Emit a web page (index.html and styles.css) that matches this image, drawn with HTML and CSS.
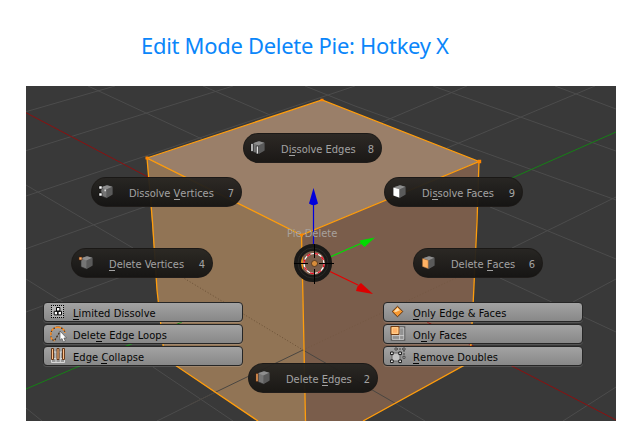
FILE: index.html
```html
<!DOCTYPE html>
<html lang="en">
<head>
<meta charset="utf-8">
<title>Edit Mode Delete Pie</title>
<link rel="stylesheet" href="styles.css">
</head>
<body>
<h1 class="title"><span>Edit Mode Delete Pie: Hotkey X</span></h1>
<main class="viewport">
  <svg class="scene" width="590" height="335" viewBox="26 86 590 335" fill="none">
    <path class="grid" d="M26 111.7L115 86M26 150.7L233 86M26 196L355 86M26 248.7L150 205M26 312L156 264M157 421L250 375M88 86L202 139M203 86L270 115M305 86L355 106L616 200M433 86L616 151M555 86L616 109M26 185L133 248M26 279L85 316M153 367L233 421M26 408L42 421M467 86L380 123M595 86L447 148M616 197L512 248M616 279L573 302M616 387L563 421M490 207L616 259M500 278L616 332M400 406L425 421"/>
    <path class="axis-x" d="M26 112.7L148 177M427 322L616 420"/>
    <path class="axis-y" d="M616 132L512 178M26 389L182 322"/>
    <path class="face-top" d="M147 158L322 100L479 161.5L301.5 235Z"/>
    <path class="face-left" d="M147 158L301.5 235L305.5 421H258L164.5 358L157 290Z"/>
    <path class="face-right" d="M479 161.5L301.5 235L305.5 421H363L470 362L473.3 300Z"/>
    <path class="floor" d="M190 404.5L303 350L400 406"/>
    <path class="hidden-edge" d="M182 277L303 350"/>
    <path class="hidden-edge faint" d="M303 350L473 270"/>
    <path class="axis-x" d="M427 322L471 345"/>
    <path class="axis-y" d="M120 349L182 322"/>
    <path class="edge" d="M147 158L322 100L479 161.5L301.5 235ZM147 158L152.5 222L157 290L164.5 358L258 421M479 161.5L477 222L473.3 300L470 362L363 421M301.5 235L303 300L305.5 421"/>
    <path class="vertex" d="M145.5 156.5h3v3h-3zM320.5 98.8h3v2.5h-3zM477.7 159.7h3.5v3.5h-3.5zM300 233.5h3v3h-3z"/>

    <path d="M313.5 204V246" stroke="#0000e0" stroke-width="1.2"/>
    <path d="M313.5 188L318 203.5Q313.5 207 309 203.5Z" fill="#0000dc"/>
    <path d="M330 257L362 243" stroke="#00e000" stroke-width="1.2"/>
    <path d="M375 237.5L364.5 247Q361 245 359.5 240.5Z" fill="#00dc00"/>
    <path d="M330 271.5L358 285" stroke="#e60000" stroke-width="1.2"/>
    <path d="M373 294L356 291Q357 285.5 361 283Z" fill="#dc0000"/>
    <text class="pie-title" x="287" y="237">Pie Delete</text>
    <circle cx="313" cy="263" r="15.6" stroke="#1a1917" stroke-width="7"/>
    <circle cx="313" cy="263" r="15" stroke="#2b2a27"/>
    <circle cx="314" cy="263.5" r="10" stroke="#fff" stroke-width="1.2"/>
    <circle cx="314" cy="263.5" r="10" stroke="#f00018" stroke-width="1.2" stroke-dasharray="3.93"/>
    <path d="M314.5 244V258M314.5 269V284M294 263.5H308M319 263.5H334" stroke="#000"/>
    <circle cx="314.5" cy="263.5" r="3" fill="#d88d3c" stroke="#3e2713" stroke-width=".7"/>
  </svg>

  <svg width="0" height="0" class="defs">
    <symbol id="cube" viewBox="0 0 16 16">
      <path d="M1 3.2L7 1.2L12.4 2.8V10.6L6.4 14L1 11.8Z" fill="#757575" stroke="#2c2c2c" stroke-width=".6"/>
      <path d="M1 3.2L7 1.2L12.4 2.8L6.4 5.4Z" fill="#8e8e8e"/>
      <path d="M6.4 5.4L12.4 2.8V10.6L6.4 14Z" fill="#5a5a5a"/>
    </symbol>
  </svg>

  <div class="pie n"><svg class="ico"><use href="#cube" width="16" height="16"/><path d="M-1 3.5h2v8h-2zM4.3 6h2v8h-2z" fill="#fff" stroke="#000" stroke-width=".6"/></svg><span class="label">D<u>i</u>ssolve Edges</span><b>8</b></div>
  <div class="pie nw"><svg class="ico"><use href="#cube" width="16" height="16"/><path d="M-1 2h3v3h-3zM-1 9h3v3h-3z" fill="#fff" stroke="#000" stroke-width=".5"/><path d="M4.4 5.4h1.6v1.8h-1.6z" fill="#ddd"/></svg><span class="label">Dissolve <u>V</u>ertices</span><b>7</b></div>
  <div class="pie ne"><svg class="ico"><use href="#cube" width="16" height="16"/><path d="M.4 3.4L6.2 5.3V13.6L.4 11.4Z" fill="#fff"/></svg><span class="label">Di<u>s</u>solve Faces</span><b>9</b></div>
  <div class="pie w"><svg class="ico"><use href="#cube" width="16" height="16"/><path d="M-1 2h3v3h-3z" fill="#ffac62" stroke="#4b230a" stroke-width=".6"/></svg><span class="label"><u>D</u>elete Vertices</span><b>4</b></div>
  <div class="pie e"><svg class="ico"><use href="#cube" width="16" height="16"/><path d="M.4 3.4L6.2 5.3V13.6L.4 11.4Z" fill="#ffb264" stroke="#8b4e1b" stroke-width=".4"/></svg><span class="label">Delete <u>F</u>aces</span><b>6</b></div>
  <div class="pie s"><svg class="ico"><use href="#cube" width="16" height="16"/><path d="M-1 3.5h2v8h-2z" fill="#ffac62" stroke="#4b230a" stroke-width=".6"/></svg><span class="label">Delete <u>E</u>dges</span><b>2</b></div>

  <div class="list left">
    <div class="item"><svg class="ico"><path d="M1.5 1.5h12v12h-12z" fill="#b4b4b4"/><path d="M1 1.5h13M1 13.5h13M1.5 1v13M13.5 1v13" fill="none" stroke="#000" stroke-dasharray="1"/><path d="M6.5 3.5h3.4v3.6h-3.4zM4.2 7.3h3.5v3.6h-3.5zM8 7.3h3.5v3.6h-3.5z" fill="#fff" stroke="#000"/></svg><span class="label"><u>L</u>imited Dissolve</span></div>
    <div class="item"><svg class="ico"><path d="M8 1.2C12 1.2 15 4 15 7M8 1.2C3.5 1.2 .8 4.5 .8 8.5C.8 12 2 14.3 4.5 14.7L10 5.5" fill="none" stroke="#3e260f" stroke-width="1.2" stroke-dasharray="2 1.3"/><path d="M8 1.2C12 1.2 15 4 15 7M8 1.2C3.5 1.2 .8 4.5 .8 8.5C.8 12 2 14.3 4.5 14.7" fill="none" stroke="#ff8d20" stroke-width="1.5" stroke-dasharray="3 1.6"/><path d="M10 5V14.2L12 12.5L13.5 16L15.3 15.2L13.9 12H16.5Z" fill="#fff" stroke="#444" stroke-width=".6"/></svg><span class="label">Dele<u>t</u>e Edge Loops</span></div>
    <div class="item"><svg class="ico"><path d="M1.5 4h13v10.5h-13zM1.5 10.5h13M6 4v10.5M10.3 4v10.5" fill="#999" stroke="#d8d8d8"/><path d="M1.5 .5h2v11h-2zM7 .5h2v11h-2zM12.5 .5h2v11h-2z" fill="#ffc08a" stroke="#582c0f" stroke-width=".9"/></svg><span class="label">Edge <u>C</u>ollapse</span></div>
  </div>
  <div class="list right">
    <div class="item"><svg class="ico"><path d="M7.5 2.3L12.8 7.5L7.5 12.8L2.2 7.5Z" fill="#f7982f" stroke="#5d320f"/><path d="M7.5 3.8L3.8 7.5L6 8L10 6.3Z" fill="#ffdca8"/></svg><span class="label"><u>O</u>nly Edge &amp; Faces</span></div>
    <div class="item"><svg class="ico"><path d="M1.5 1h13v13h-13z" fill="#929292" stroke="#585858" stroke-width="1.6"/><path d="M2.2 1.8h11.6v11.6h-11.6zM2 9.6h12M9.6 2v12" fill="none" stroke="#d0d0d0" stroke-width=".9"/><path d="M1 .5h8v8h-8z" fill="#ffb26a" stroke="#713b11"/><path d="M2.2 1.7h5.6v5.6h-5.6z" fill="none" stroke="#ffda9b" stroke-width=".8"/></svg><span class="label">O<u>n</u>ly Faces</span></div>
    <div class="item"><svg class="ico"><path d="M6 1h8v8" fill="none" stroke="#444" stroke-dasharray="2 1"/><path d="M5 0h2v2h-2zM13 0h2v2h-2zM13 8.3h2v2h-2z" fill="#ccc" stroke="#333" stroke-width=".8"/><path d="M2 5h8v8h-8z" fill="#c4c4c4" stroke="#666"/><path d="M.6 4h2.6v2.6h-2.6zM8.8 4h2.6v2.6h-2.6zM.6 12h2.6v2.6h-2.6zM8.8 12h2.6v2.6h-2.6z" fill="#fff" stroke="#000" stroke-width=".9"/></svg><span class="label"><u>R</u>emove Doubles</span></div>
  </div>
</main>
</body>
</html>
```
FILE: styles.css
```css
* { box-sizing: border-box; }
body {
  margin: 0;
  width: 639px;
  height: 421px;
  overflow: hidden;
  background: #fff;
  font-family: "DejaVu Sans Condensed", "DejaVu Sans", sans-serif;
  font-stretch: condensed;
  font-size: 11px;
}
.title {
  margin: 0;
  height: 86px;
  padding: 31px 0 0 141px;
  font: 400 22.5px/30px "Noto Sans", sans-serif;
  letter-spacing: -0.3px;
  color: #0a86fa;
  white-space: nowrap;
}
.title span {
  display: inline-block;
  transform: scaleX(.977);
  transform-origin: 0 50%;
}
.viewport {
  position: relative;
  width: 590px;
  height: 335px;
  margin-left: 26px;
  overflow: hidden;
  background: #393939;
}
.scene { display: block; }
.defs { position: absolute; }
.grid { stroke: #4c4c4c; }
.axis-x { stroke: #8c1010; }
.axis-y { stroke: #168016; }
.face-top { fill: #9a7f69; }
.face-left { fill: #917455; }
.face-right { fill: #7a5d4b; }
.edge { stroke: #ff9d0c; stroke-width: 1.3; }
.vertex { fill: #ff8500; }
.floor { stroke: #4a4641; }
.hidden-edge { stroke: #6b5136; stroke-dasharray: 1 2; }
.faint { opacity: .4; }
.pie-title { fill: #a8a29d; font-size: 11px; }

.pie {
  position: absolute;
  display: flex;
  align-items: center;
  height: 30px;
  padding: 0 7px 0 8px;
  border: 1px solid rgba(30, 27, 24, .75);
  border-radius: 15px;
  background: linear-gradient(rgba(39, 37, 34, .95), rgba(20, 19, 18, .95));
  color: #a3a3a3;
}
.pie b { margin-left: auto; padding-top: 2px; font-weight: 400; }
.ico { flex: none; width: 16px; height: 16px; overflow: visible; }
.pie .ico { margin-right: 13px; }
.label { padding-top: 2px; white-space: nowrap; }
u { position: relative; text-decoration: none; }
u::after {
  content: "";
  position: absolute;
  left: 0;
  bottom: 0;
  width: 6px;
  height: 1px;
  background: currentColor;
}
.n { left: 217px; top: 47px; width: 139px; }
.nw { left: 65px; top: 91px; width: 151px; }
.ne { left: 358px; top: 91px; width: 139px; }
.w { left: 45px; top: 162px; width: 142px; }
.e { left: 387px; top: 162px; width: 130px; }
.s { left: 222px; top: 277px; width: 130px; }

.list {
  position: absolute;
  top: 216px;
  display: flex;
  flex-direction: column;
  gap: 2px;
  width: 200px;
  letter-spacing: .08px;
}
.list.left { left: 17px; }
.list.right { left: 357px; }
.item {
  display: flex;
  align-items: center;
  height: 20px;
  padding: 0 6px;
  border: 1px solid #262626;
  border-radius: 4px;
  background: linear-gradient(#a3a3a3, #888);
  box-shadow: 0 1px 0 rgba(255, 255, 255, .14);
  color: #050505;
}
.item .ico { margin-right: 7px; }
```
